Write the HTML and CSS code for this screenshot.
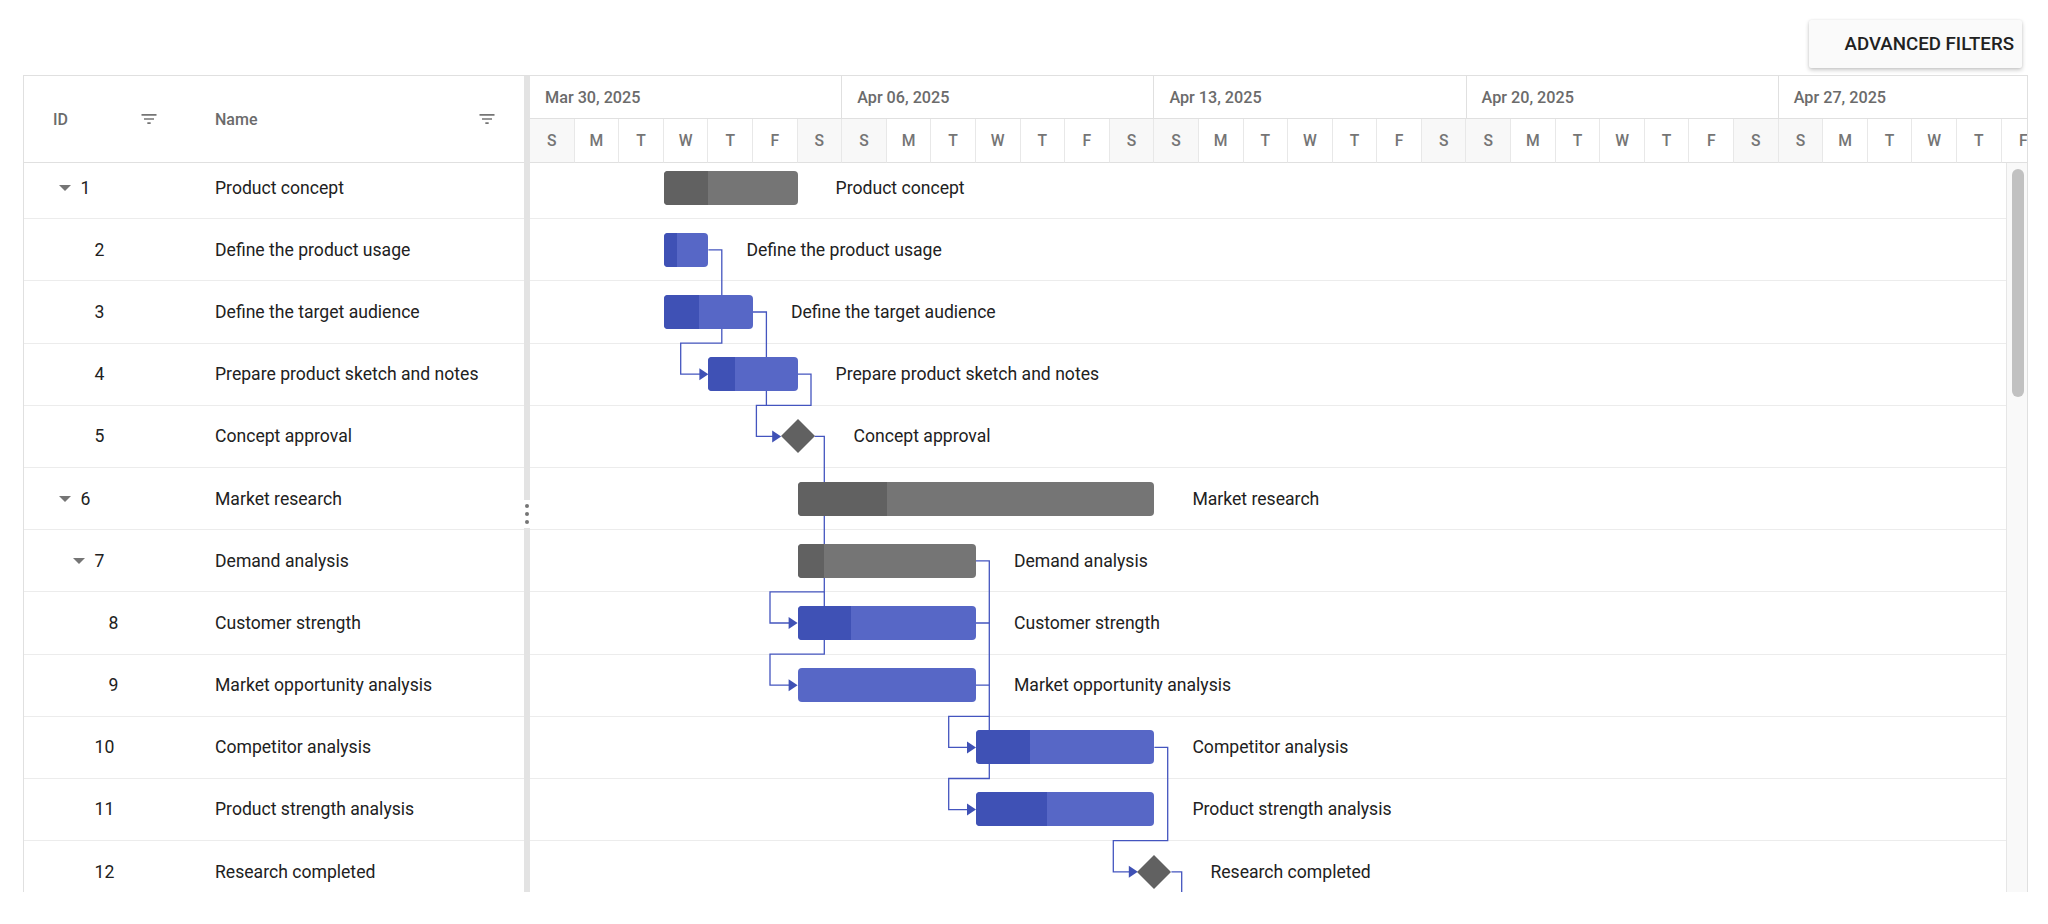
FILE: index.html
```html
<!DOCTYPE html>
<html lang="en">
<head>
    <meta charset="UTF-8">
    <meta name="viewport" content="width=device-width, initial-scale=1.0">
    <title>Project Gantt</title>
    <link rel="stylesheet" href="styles.css">
</head>
<body>
    <div class="toolbar">
        <button class="filter-btn" type="button">ADVANCED FILTERS</button>
    </div>

    <div class="gantt">
        <!-- task grid -->
        <div class="grid-pane">
            <div class="grid-head">
                <div class="hcell id-col">
                    <span>ID</span>
                    <svg class="filter-icon" viewBox="0 0 24 24"><path d="M10 18h4v-2h-4v2zM3 6v2h18V6H3zm3 7h12v-2H6v2z"/></svg>
                </div>
                <div class="hcell name-col">
                    <span>Name</span>
                    <svg class="filter-icon" viewBox="0 0 24 24"><path d="M10 18h4v-2h-4v2zM3 6v2h18V6H3zm3 7h12v-2H6v2z"/></svg>
                </div>
            </div>
            <div class="grid-body">
                <div class="rows">
                    <div class="row"><div class="cell id-col lvl-0"><span class="caret"></span>1</div><div class="cell name-col">Product concept</div></div>
                    <div class="row"><div class="cell id-col lvl-1"><span class="caret leaf"></span>2</div><div class="cell name-col">Define the product usage</div></div>
                    <div class="row"><div class="cell id-col lvl-1"><span class="caret leaf"></span>3</div><div class="cell name-col">Define the target audience</div></div>
                    <div class="row"><div class="cell id-col lvl-1"><span class="caret leaf"></span>4</div><div class="cell name-col">Prepare product sketch and notes</div></div>
                    <div class="row"><div class="cell id-col lvl-1"><span class="caret leaf"></span>5</div><div class="cell name-col">Concept approval</div></div>
                    <div class="row"><div class="cell id-col lvl-0"><span class="caret"></span>6</div><div class="cell name-col">Market research</div></div>
                    <div class="row"><div class="cell id-col lvl-1"><span class="caret"></span>7</div><div class="cell name-col">Demand analysis</div></div>
                    <div class="row"><div class="cell id-col lvl-2"><span class="caret leaf"></span>8</div><div class="cell name-col">Customer strength</div></div>
                    <div class="row"><div class="cell id-col lvl-2"><span class="caret leaf"></span>9</div><div class="cell name-col">Market opportunity analysis</div></div>
                    <div class="row"><div class="cell id-col lvl-1"><span class="caret leaf"></span>10</div><div class="cell name-col">Competitor analysis</div></div>
                    <div class="row"><div class="cell id-col lvl-1"><span class="caret leaf"></span>11</div><div class="cell name-col">Product strength analysis</div></div>
                    <div class="row"><div class="cell id-col lvl-1"><span class="caret leaf"></span>12</div><div class="cell name-col">Research completed</div></div>
                </div>
            </div>
        </div>

        <div class="splitter">
            <div class="handle"><span class="dot"></span><span class="dot"></span><span class="dot"></span></div>
        </div>

        <!-- timeline + chart -->
        <div class="chart-pane">
            <div class="timeline">
                <div class="weeks">
                    <div class="week">Mar 30, 2025</div>
                    <div class="week">Apr 06, 2025</div>
                    <div class="week">Apr 13, 2025</div>
                    <div class="week">Apr 20, 2025</div>
                    <div class="week">Apr 27, 2025</div>
                </div>
                <div class="days">
                    <div class="day off">S</div><div class="day">M</div><div class="day">T</div><div class="day">W</div><div class="day">T</div><div class="day">F</div><div class="day off">S</div>
                    <div class="day off">S</div><div class="day">M</div><div class="day">T</div><div class="day">W</div><div class="day">T</div><div class="day">F</div><div class="day off">S</div>
                    <div class="day off">S</div><div class="day">M</div><div class="day">T</div><div class="day">W</div><div class="day">T</div><div class="day">F</div><div class="day off">S</div>
                    <div class="day off">S</div><div class="day">M</div><div class="day">T</div><div class="day">W</div><div class="day">T</div><div class="day">F</div><div class="day off">S</div>
                    <div class="day off">S</div><div class="day">M</div><div class="day">T</div><div class="day">W</div><div class="day">T</div><div class="day">F</div><div class="day off">S</div>
                </div>
            </div>

            <div class="chart-body">
                <div class="chart-view">
                    <div class="chart-canvas">
                        <!-- dependency connectors, drawn under the bars -->
                        <svg class="links" viewBox="0 0 1476 760">
                            <g class="link-lines">
                                <path d="M178.4 92.8 H191.8 V186.1 H150.7 V217.2 H170"/>
                                <path d="M223 155 H236.4 V248.3 H226.4 V279.4 H243"/>
                                <path d="M267.6 217.2 H281 V248.3 H236.4"/>
                                <path d="M284.6 279.4 H294.3 V434.9 H240 V466 H259"/>
                                <path d="M294.3 434.9 V497.1 H240 V528.2 H259"/>
                                <path d="M446 403.8 H459.3 V621.5 H418.7 V652.6 H437.5"/>
                                <path d="M446 466 H459.3 M446 528.2 H459.3"/>
                                <path d="M459.3 559.3 H418.7 V590.4 H437.5"/>
                                <path d="M624.4 590.4 H637.7 V683.7 H583.3 V714.8 H599"/>
                                <path d="M641.4 714.8 H651.7 V760"/>
                            </g>
                            <g class="link-arrows">
                                <polygon points="178.4,217.2 169.4,211.2 169.4,223.2"/>
                                <polygon points="251.2,279.4 242.2,273.4 242.2,285.4"/>
                                <polygon points="267.6,466 258.6,460 258.6,472"/>
                                <polygon points="267.6,528.2 258.6,522.2 258.6,534.2"/>
                                <polygon points="446,590.4 437,584.4 437,596.4"/>
                                <polygon points="446,652.6 437,646.6 437,658.6"/>
                                <polygon points="607.8,714.8 598.8,708.8 598.8,720.8"/>
                            </g>
                        </svg>

                        <div class="chart-rows">
                            <div class="crow"><div class="bar parent" style="margin-left:133.8px;width:133.8px"><span class="progress" style="width:33%"></span></div><span class="bar-label">Product concept</span></div>
                            <div class="crow"><div class="bar child" style="margin-left:133.8px;width:44.6px"><span class="progress" style="width:30%"></span></div><span class="bar-label">Define the product usage</span></div>
                            <div class="crow"><div class="bar child" style="margin-left:133.8px;width:89.2px"><span class="progress" style="width:40%"></span></div><span class="bar-label">Define the target audience</span></div>
                            <div class="crow"><div class="bar child" style="margin-left:178.4px;width:89.2px"><span class="progress" style="width:30%"></span></div><span class="bar-label">Prepare product sketch and notes</span></div>
                            <div class="crow"><div class="milestone" style="margin-left:255.6px"></div><span class="bar-label">Concept approval</span></div>
                            <div class="crow"><div class="bar parent" style="margin-left:267.6px;width:356.8px"><span class="progress" style="width:25%"></span></div><span class="bar-label">Market research</span></div>
                            <div class="crow"><div class="bar parent" style="margin-left:267.6px;width:178.4px"><span class="progress" style="width:15%"></span></div><span class="bar-label">Demand analysis</span></div>
                            <div class="crow"><div class="bar child" style="margin-left:267.6px;width:178.4px"><span class="progress" style="width:30%"></span></div><span class="bar-label">Customer strength</span></div>
                            <div class="crow"><div class="bar child" style="margin-left:267.6px;width:178.4px"><span class="progress" style="width:0%"></span></div><span class="bar-label">Market opportunity analysis</span></div>
                            <div class="crow"><div class="bar child" style="margin-left:446px;width:178.4px"><span class="progress" style="width:30%"></span></div><span class="bar-label">Competitor analysis</span></div>
                            <div class="crow"><div class="bar child" style="margin-left:446px;width:178.4px"><span class="progress" style="width:40%"></span></div><span class="bar-label">Product strength analysis</span></div>
                            <div class="crow"><div class="milestone" style="margin-left:612.4px"></div><span class="bar-label">Research completed</span></div>
                        </div>
                    </div>
                </div>
                <div class="vscroll"><div class="thumb"></div></div>
            </div>
        </div>
    </div>
</body>
</html>
```

FILE: styles.css
```css
* {
    box-sizing: border-box;
}

body {
    margin: 0;
    background: #fff;
    color: #212121;
    font-family: Roboto, 'Liberation Sans', sans-serif;
    overflow: hidden;
}

/* toolbar */
.toolbar {
    display: flex;
    justify-content: flex-end;
    align-items: flex-start;
    height: 75px;
    padding: 20px 26px 0 0;
}

.filter-btn {
    width: 213px;
    height: 48px;
    padding: 0 8px 0 0;
    border: none;
    border-radius: 2px;
    background: #fafafa;
    box-shadow: 0 2px 4px rgba(0,0,0,0.22), 0 0 2px rgba(0,0,0,0.08);
    color: #212121;
    font-family: Roboto, 'Liberation Sans', sans-serif;
    font-size: 18.7px;
    font-weight: 500;
    text-align: right;
    white-space: nowrap;
    cursor: pointer;
}

/* gantt frame */
.gantt {
    display: flex;
    width: 2005px;
    height: 817px;
    margin-left: 23px;
    border: 1px solid #e0e0e0;
    border-bottom: none;
}

.grid-pane {
    flex: none;
    width: 500px;
    display: flex;
    flex-direction: column;
    overflow: hidden;
}

.grid-head {
    flex: none;
    display: flex;
    height: 87px;
    border-bottom: 1px solid #e0e0e0;
}

.hcell {
    display: flex;
    align-items: center;
    justify-content: space-between;
    color: #6b6b6b;
    font-size: 16px;
    font-weight: 500;
}

.hcell.id-col {
    width: 168px;
    padding: 0 33px 0 29px;
}

.hcell.name-col {
    flex: 1;
    padding: 0 27px 0 23px;
}

.filter-icon {
    width: 20px;
    height: 20px;
    fill: #757575;
}

.grid-body {
    flex: 1;
    overflow: hidden;
}

.rows {
    margin-top: -6px;
}

.row {
    display: flex;
    align-items: center;
    height: 62.2px;
    border-bottom: 1px solid #ececec;
    font-size: 17.6px;
}

.cell.id-col {
    width: 168px;
    display: flex;
    align-items: center;
}

.lvl-0 { padding-left: 34.5px; }
.lvl-1 { padding-left: 48.5px; }
.lvl-2 { padding-left: 62.5px; }

.caret {
    flex: none;
    width: 12px;
    height: 6px;
    margin-right: 10px;
    border-left: 6px solid transparent;
    border-right: 6px solid transparent;
    border-top: 6px solid #757575;
}

.caret.leaf {
    border-top-color: transparent;
}

.cell.name-col {
    padding-left: 23px;
    white-space: nowrap;
}

/* splitter */
.splitter {
    flex: none;
    width: 6px;
    background: #e3e3e3;
    display: flex;
    flex-direction: column;
    align-items: center;
}

.handle {
    margin-top: 424px;
    width: 6px;
    height: 28px;
    padding: 4px 0;
    background: #fff;
    display: flex;
    flex-direction: column;
    justify-content: space-between;
    align-items: center;
}

.dot {
    width: 4px;
    height: 4px;
    border-radius: 50%;
    background: #757575;
}

/* timeline */
.chart-pane {
    flex: 1;
    min-width: 0;
    display: flex;
    flex-direction: column;
    overflow: hidden;
}

.timeline {
    flex: none;
    height: 87px;
    overflow: hidden;
}

.weeks,
.days {
    display: flex;
}

.week {
    flex: none;
    width: 312.2px;
    height: 43px;
    padding-left: 15px;
    display: flex;
    align-items: center;
    border-right: 1px solid #e0e0e0;
    border-bottom: 1px solid #e0e0e0;
    color: #6b6b6b;
    font-size: 16.2px;
    font-weight: 500;
}

.day {
    flex: none;
    width: 44.6px;
    height: 44px;
    display: flex;
    align-items: center;
    justify-content: center;
    border-right: 1px solid #e8e8e8;
    border-bottom: 1px solid #e0e0e0;
    color: #757575;
    font-size: 15.7px;
    font-weight: 500;
}

.day.off {
    background: #f8f8f8;
}

/* chart */
.chart-body {
    flex: 1;
    min-height: 0;
    display: flex;
}

.chart-view {
    flex: 1;
    overflow: hidden;
}

.chart-canvas {
    position: relative;
    margin-top: -6px;
}

.links {
    position: absolute;
    left: 0;
    top: 0;
    width: 1476px;
    height: 760px;
    z-index: 1;
}

.link-lines path {
    fill: none;
    stroke: #4455bf;
    stroke-width: 1.3;
}

.link-arrows polygon {
    fill: #3f51b5;
}

.crow {
    display: flex;
    align-items: center;
    height: 62.2px;
    border-bottom: 1px solid #ececec;
}

.bar {
    position: relative;
    z-index: 2;
    flex: none;
    display: flex;
    height: 34px;
    border-radius: 4px;
    overflow: hidden;
}

.bar.parent { background: #757575; }
.bar.parent .progress { background: #616161; }
.bar.child { background: #5767c6; }
.bar.child .progress { background: #3f51b5; }

.progress {
    height: 100%;
}

.milestone {
    position: relative;
    z-index: 2;
    flex: none;
    width: 24px;
    height: 24px;
    background: #616161;
    transform: rotate(45deg);
}

.bar-label {
    margin-left: 38px;
    font-size: 17.6px;
    white-space: nowrap;
}

.milestone + .bar-label {
    margin-left: 44px;
}

.vscroll {
    flex: none;
    width: 21px;
    padding: 6px 3px 0 5px;
    background: #f9f9f9;
    border-left: 1px solid #e6e6e6;
}

.thumb {
    height: 228px;
    border-radius: 6px;
    background: #c1c1c1;
}
```
